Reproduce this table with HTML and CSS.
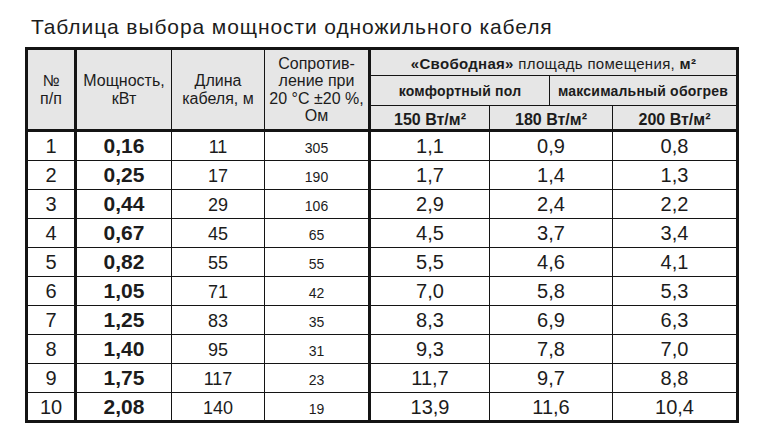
FILE: index.html
```html
<!DOCTYPE html>
<html lang="ru">
<head>
<meta charset="utf-8">
<title>Таблица выбора мощности одножильного кабеля</title>
<link rel="stylesheet" href="styles.css">
</head>
<body>
<div class="page">
  <h1 class="title">Таблица выбора мощности одножильного кабеля</h1>
  <table class="cable">
    <colgroup>
      <col class="c-num"><col class="c-power"><col class="c-len"><col class="c-res">
      <col class="c-150"><col class="c-180a"><col class="c-180b"><col class="c-200">
    </colgroup>
    <thead>
      <tr class="hr-1">
        <th rowspan="3" class="lead thick">№<br>п/п</th>
        <th rowspan="3" class="lead">Мощность,<br>кВт</th>
        <th rowspan="3" class="lead">Длина<br>кабеля, м</th>
        <th rowspan="3" class="lead thick">Сопротив-<br>ление при<br>20 °C ±20 %,<br>Ом</th>
        <th colspan="4" class="area"><b class="strong">«Свободная»</b> площадь помещения, <b class="strong">м²</b></th>
      </tr>
      <tr class="hr-2">
        <th colspan="2" class="mode">комфортный пол</th>
        <th colspan="2" class="mode">максимальный обогрев</th>
      </tr>
      <tr class="hr-3">
        <th class="dens">150 Вт/м²</th>
        <th colspan="2" class="dens">180 Вт/м²</th>
        <th class="dens">200 Вт/м²</th>
      </tr>
    </thead>
    <tbody>
      <tr class="row"><td class="num thick">1</td><td class="pow">0,16</td><td class="len">11</td><td class="res thick">305</td><td class="val">1,1</td><td colspan="2" class="val">0,9</td><td class="val">0,8</td></tr>
      <tr class="row"><td class="num thick">2</td><td class="pow">0,25</td><td class="len">17</td><td class="res thick">190</td><td class="val">1,7</td><td colspan="2" class="val">1,4</td><td class="val">1,3</td></tr>
      <tr class="row"><td class="num thick">3</td><td class="pow">0,44</td><td class="len">29</td><td class="res thick">106</td><td class="val">2,9</td><td colspan="2" class="val">2,4</td><td class="val">2,2</td></tr>
      <tr class="row"><td class="num thick">4</td><td class="pow">0,67</td><td class="len">45</td><td class="res thick">65</td><td class="val">4,5</td><td colspan="2" class="val">3,7</td><td class="val">3,4</td></tr>
      <tr class="row"><td class="num thick">5</td><td class="pow">0,82</td><td class="len">55</td><td class="res thick">55</td><td class="val">5,5</td><td colspan="2" class="val">4,6</td><td class="val">4,1</td></tr>
      <tr class="row"><td class="num thick">6</td><td class="pow">1,05</td><td class="len">71</td><td class="res thick">42</td><td class="val">7,0</td><td colspan="2" class="val">5,8</td><td class="val">5,3</td></tr>
      <tr class="row"><td class="num thick">7</td><td class="pow">1,25</td><td class="len">83</td><td class="res thick">35</td><td class="val">8,3</td><td colspan="2" class="val">6,9</td><td class="val">6,3</td></tr>
      <tr class="row"><td class="num thick">8</td><td class="pow">1,40</td><td class="len">95</td><td class="res thick">31</td><td class="val">9,3</td><td colspan="2" class="val">7,8</td><td class="val">7,0</td></tr>
      <tr class="row"><td class="num thick">9</td><td class="pow">1,75</td><td class="len">117</td><td class="res thick">23</td><td class="val">11,7</td><td colspan="2" class="val">9,7</td><td class="val">8,8</td></tr>
      <tr class="row row-last"><td class="num thick">10</td><td class="pow">2,08</td><td class="len">140</td><td class="res thick">19</td><td class="val">13,9</td><td colspan="2" class="val">11,6</td><td class="val">10,4</td></tr>
    </tbody>
  </table>
</div>
</body>
</html>
```

FILE: styles.css
```css
html, body {
  margin: 0;
  padding: 0;
  background: #ffffff;
}

body {
  color: #1c1c1c;
  font-family: "Liberation Sans", Arial, sans-serif;
}

.page {
  padding: 15px 0 0 25px;
}

.title {
  margin: 0 0 8px 6px;
  font-size: 21px;
  font-weight: normal;
  line-height: 24px;
  letter-spacing: 0.9px;
}

.cable {
  border-collapse: separate;
  border-spacing: 0;
  table-layout: fixed;
  width: 714px;
  border: 3px solid #141414;
}

.c-num { width: 49px; }
.c-power { width: 95px; }
.c-len { width: 93px; }
.c-res { width: 106px; }
.c-150 { width: 119px; }
.c-180a { width: 60px; }
.c-180b { width: 63px; }
.c-200 { width: 123px; }

.cable th,
.cable td {
  box-sizing: border-box;
  padding: 0;
  text-align: center;
  border-right: 1px solid #141414;
  border-bottom: 1px solid #141414;
}

.cable tr > :last-child {
  border-right: 0;
}

.cable .thick {
  border-right: 3px solid #141414;
}

/* header */
.cable th {
  background: #e6e6e6;
  font-weight: normal;
  vertical-align: middle;
  white-space: nowrap;
}

.hr-1 { height: 26px; }
.hr-2 { height: 30px; }
.hr-3 { height: 26px; }

.cable .lead {
  font-size: 16px;
  line-height: 17.5px;
  border-bottom: 3px solid #141414;
}

.cable .area {
  font-size: 15px;
  padding-top: 2px;
  letter-spacing: 0.3px;
}

.strong {
  font-weight: bold;
}

.cable .mode {
  font-size: 14px;
  font-weight: bold;
  letter-spacing: 0.2px;
}

.cable .dens {
  font-size: 16px;
  font-weight: bold;
  padding-top: 4px;
  border-bottom: 3px solid #141414;
}

/* body */
.row { height: 29px; }
.row-last { height: 27px; }

.cable .row-last td {
  border-bottom: 0;
}

.cable td {
  vertical-align: baseline;
  padding-top: 2px;
  line-height: normal;
}

.cable .num { font-size: 20px; }
.cable .pow { font-size: 21px; font-weight: bold; }
.cable .len { font-size: 18px; }
.cable .res { font-size: 14px; }
.cable .val { font-size: 20px; }
```
